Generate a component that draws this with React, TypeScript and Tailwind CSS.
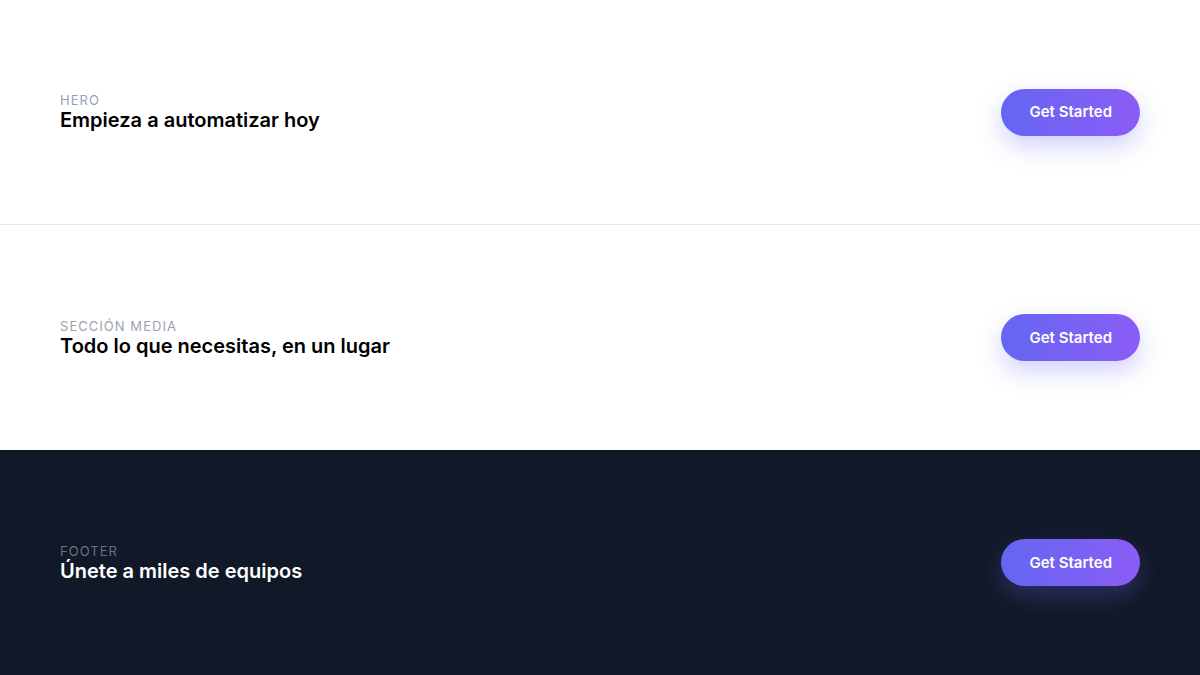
import React from 'react';

type CtaProps = {
  label: string;
  title: string;
  dark?: boolean;
  bordered?: boolean;
  labelClass: string;
};

const CtaRow: React.FC<CtaProps> = ({ label, title, dark, bordered, labelClass }) => (
  <section
    className={`h-[225px] flex items-center justify-between px-[60px] ${
      dark ? 'bg-[#111827]' : 'bg-white'
    } ${bordered ? 'border-b border-[#e5e7eb]' : ''}`}
  >
    <div>
      <p className={`text-[13px] uppercase tracking-[0.08em] leading-4 ${labelClass}`}>{label}</p>
      <h2 className={`text-xl font-semibold leading-6 ${dark ? 'text-white' : 'text-black'}`}>{title}</h2>
    </div>
    <button className="rounded-full bg-gradient-to-r from-[#6366f1] to-[#8b5cf6] px-7 py-[13.5px] text-[15px] leading-5 font-semibold text-white shadow-[0_10px_25px_rgba(99,102,241,0.3)]">
      Get Started
    </button>
  </section>
);

export default function App() {
  return (
    <div className="w-[1200px] h-[675px] overflow-hidden font-['Inter',sans-serif]">
      <CtaRow label="Hero" title="Empieza a automatizar hoy" bordered labelClass="text-[#94a3b8]" />
      <CtaRow label="Sección media" title="Todo lo que necesitas, en un lugar" labelClass="text-[#9ca3af]" />
      <CtaRow label="Footer" title="Únete a miles de equipos" dark labelClass="text-[#6b7280]" />
    </div>
  );
}
